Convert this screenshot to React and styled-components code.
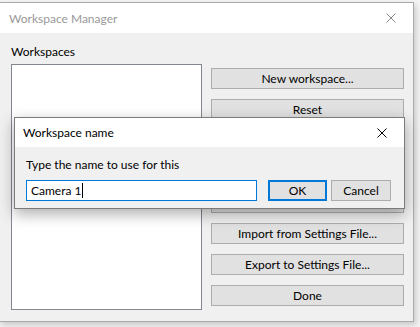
import styled, { createGlobalStyle } from 'styled-components';

const GlobalStyle = createGlobalStyle`
    html, body {
        margin: 0;
        padding: 0;
        background: #f4f4f4;
        font-family: 'Segoe UI', Lato, 'Noto Sans', 'Liberation Sans', sans-serif;
        font-size: 12px;
        color: #000;
    }
`;

const Screen = styled.div`
    position: relative;
    width: 420px;
    height: 327px;
    overflow: hidden;
    padding-top: 2px;
    box-sizing: border-box;
`;

const Window = styled.div`
    margin-left: -1px;
    width: 415px;
    height: 320px;
    box-sizing: border-box;
    border: 1px solid #aaaaaa;
    background: #f0f0f0;
    display: flex;
    flex-direction: column;
    box-shadow: 2px 3px 6px rgba(0, 0, 0, 0.18);
`;

const TitleBar = styled.div`
    height: 30px;
    flex: none;
    background: #fff;
    display: flex;
    align-items: center;
    justify-content: space-between;
    padding: 0 0 0 9px;
    color: ${(props) => (props.active ? '#000' : '#999')};
    font-size: 12px;
`;

const CloseButton = styled.div`
    width: 44px;
    height: 100%;
    display: flex;
    align-items: center;
    justify-content: center;
`;

const Body = styled.div`
    flex: 1;
    display: flex;
    gap: 9px;
    padding: 11px 9px 11px 11px;
`;

const LeftColumn = styled.div`
    display: flex;
    flex-direction: column;
`;

const Label = styled.div`
    line-height: 16px;
    margin-bottom: 4px;
`;

const ListBox = styled.div`
    width: 191px;
    flex: 1;
    box-sizing: border-box;
    background: #fff;
    border: 1px solid #828790;
`;

const ButtonColumn = styled.div`
    flex: 1;
    display: flex;
    flex-direction: column;
    gap: 10px;
    padding-top: 24px;
`;

const Button = styled.button`
    height: 21px;
    width: ${(props) => props.width || '100%'};
    margin: 0 0 0 ${(props) => props.gap || '0'};
    box-sizing: border-box;
    background: #e1e1e1;
    border: ${(props) => (props.primary ? '2px solid #0078d7' : '1px solid #adadad')};
    font-family: inherit;
    font-size: 12px;
    color: #000;
    padding: 0;
    flex: none;
`;

const Dialog = styled.div`
    position: absolute;
    left: 14px;
    top: 117px;
    width: 391px;
    height: 92px;
    box-sizing: border-box;
    border: 1px solid #7b7b7b;
    background: #f0f0f0;
    display: flex;
    flex-direction: column;
    box-shadow: 0 5px 14px rgba(0, 0, 0, 0.32);
`;

const DialogTitle = styled(TitleBar)`
    height: 29px;
    padding-left: 8px;
`;

const DialogBody = styled.div`
    padding: 10px 13px 0 11px;
    display: flex;
    flex-direction: column;
    gap: 3px;
`;

const Row = styled.div`
    display: flex;
    align-items: center;
`;

const Input = styled.div`
    width: 231px;
    height: 21px;
    box-sizing: border-box;
    border: 1px solid #0078d7;
    background: #fff;
    display: flex;
    align-items: center;
    padding-left: 4px;
    margin-right: 11px;
`;

const Caret = styled.span`
    display: inline-block;
    width: 1px;
    height: 15px;
    background: #000;
    margin-left: 1px;
`;

const XIcon = ({ color, size = 10 }) => (
    <svg width={size} height={size} viewBox="0 0 10 10">
        <path d="M0.5 0.5 L9.5 9.5 M9.5 0.5 L0.5 9.5" stroke={color} strokeWidth="1" />
    </svg>
);

// the middle three are covered by the name dialog
const mainButtons = [
    'New workspace...',
    'Reset',
    '',
    '',
    '',
    'Import from Settings File...',
    'Export to Settings File...',
    'Done',
];

const App = () => {
    return (
        <Screen>
            <GlobalStyle />
            <Window>
                <TitleBar>
                    <span>Workspace Manager</span>
                    <CloseButton>
                        <XIcon color="#8a8a8a" />
                    </CloseButton>
                </TitleBar>
                <Body>
                    <LeftColumn>
                        <Label>Workspaces</Label>
                        <ListBox />
                    </LeftColumn>
                    <ButtonColumn>
                        {mainButtons.map((label, index) => (
                            <Button key={index}>{label}</Button>
                        ))}
                    </ButtonColumn>
                </Body>
            </Window>
            <Dialog>
                <DialogTitle active>
                    <span>Workspace name</span>
                    <CloseButton>
                        <XIcon color="#000" />
                    </CloseButton>
                </DialogTitle>
                <DialogBody>
                    <Label>Type the name to use for this</Label>
                    <Row>
                        <Input>
                            Camera 1<Caret />
                        </Input>
                        <Button primary width="59px">OK</Button>
                        <Button width="60px" gap="4px">Cancel</Button>
                    </Row>
                </DialogBody>
            </Dialog>
        </Screen>
    );
};

export default App;
